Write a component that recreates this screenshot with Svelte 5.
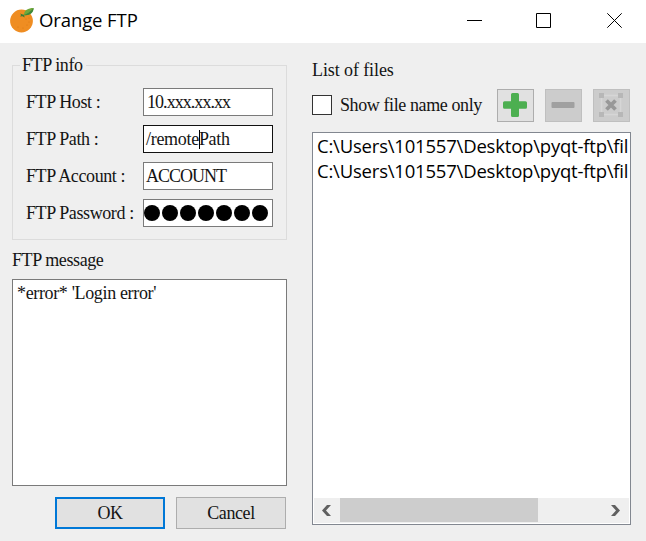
<script>
  let fields = $state([
    { label: 'FTP Host :', value: '10.xxx.xx.xx', cls: 'host' },
    { label: 'FTP Path :', value: '/remote', rest: 'Path', cls: 'path', focused: true },
    { label: 'FTP Account :', value: 'ACCOUNT', cls: 'account' },
    { label: 'FTP Password :', secret: 7, cls: 'password' }
  ]);
  let files = $state([
    'C:\\Users\\101557\\Desktop\\pyqt-ftp\\fil',
    'C:\\Users\\101557\\Desktop\\pyqt-ftp\\fil'
  ]);
</script>

<div class="window">
  <header>
    <svg class="logo" width="24" height="26" viewBox="0 0 24 26">
      <circle cx="11.5" cy="14" r="11.4" fill="#ef8d22" />
      <g fill="#d97716">
        <circle cx="16" cy="12" r=".6" /><circle cx="19" cy="15" r=".6" /><circle cx="17" cy="18" r=".6" />
        <circle cx="13" cy="21" r=".6" /><circle cx="19" cy="11" r=".6" /><circle cx="8" cy="20" r=".6" />
      </g>
      <path d="M10 6.5l3.5 1.3 2.8-1.2-2.2 2 .6 2-2.2-1.4-2.4.4 1-1.6z" fill="#3c7d35" />
      <path d="M14 8C14 3 18 1 23.6 1C23.5 6 19 9 14 8z" fill="#70a83b" />
      <path d="M14 8C17 7 20 5 23.6 1C23.5 6 19 9 14 8z" fill="#3e873a" />
    </svg>
    <span class="title">Orange FTP</span>
    <svg class="controls" width="156" height="16" viewBox="0 0 156 16" fill="none" stroke="#000" stroke-width="1">
      <path d="M0 7.5h15" />
      <path d="M69.5 .5h14v14h-14z" />
      <path d="M140.3 .3l14.4 14.4M154.7 .3L140.3 14.7" />
    </svg>
  </header>

  <main>
    <section class="left">
      <div class="group">
        <span class="legend">FTP info</span>
        {#each fields as f}
          <div class="row">
            <span class="label">{f.label}</span>
            <div class="field {f.cls}" class:focused={f.focused}>
              {#if f.secret}
                {#each Array(f.secret) as _}<i class="dot"></i>{/each}
              {:else}
                <span>{f.value}</span>{#if f.focused}<i class="caret"></i><span>{f.rest}</span>{/if}
              {/if}
            </div>
          </div>
        {/each}
      </div>
      <div class="heading">FTP message</div>
      <div class="message">*error* 'Login error'</div>
      <div class="actions">
        <button class="ok">OK</button>
        <button>Cancel</button>
      </div>
    </section>

    <section class="right">
      <div class="heading">List of files</div>
      <div class="toolbar">
        <span class="check"></span>
        <span class="checklabel">Show file name only</span>
        <button class="tool" aria-label="Add">
          <svg width="24" height="24" viewBox="0 0 24 24">
            <path d="M9.500 0h5q1.500 0 1.500 1.500V8.300h6.500q1.500 0 1.500 1.500v4.400q0 1.500-1.500 1.500H16v6.800q0 1.500-1.500 1.500h-5Q8 24 8 22.500V15.700H1.500Q0 15.700 0 14.200V9.800Q0 8.300 1.500 8.300H8V1.500Q8 0 9.500 0z" fill="#4caf50" />
          </svg>
        </button>
        <button class="tool off" aria-label="Remove">
          <svg width="24" height="24" viewBox="0 0 24 24"><rect x="0.500" y="9" width="23" height="6" rx="1" fill="#a0a0a0" /></svg>
        </button>
        <button class="tool off" aria-label="Clear">
          <svg width="24" height="24" viewBox="0 0 24 24">
            <rect x="2.500" y="2.500" width="19" height="19" fill="none" stroke="#d6d6d6" stroke-width="1.500" />
            <path d="M0 0h5v5H0zM19 0h5v5h-5zM0 19h5v5H0zM19 19h5v5h-5z" fill="#b7b7b7" />
            <path d="M7.500 7.500l9 9M16.500 7.500l-9 9" stroke="#989898" stroke-width="3.800" />
          </svg>
        </button>
      </div>
      <div class="list">
        <div class="items">
          {#each files as file}<div class="file">{file}</div>{/each}
        </div>
        <div class="scroll">
          <svg width="26" height="24" viewBox="0 0 26 24"><path d="M8 12.500L13 7h4l-5 5.500L17 18h-4z" fill="#606060" /></svg>
          <div class="track"><div class="thumb"></div></div>
          <svg width="26" height="24" viewBox="0 0 26 24"><path d="M17 12.500L12 7H8l5 5.500L8 18h4z" fill="#606060" /></svg>
        </div>
      </div>
    </section>
  </main>
</div>

<style>
  :global(body) { margin: 0; }
  .window, .window * { box-sizing: border-box; }
  .window {
    width: 646px; height: 541px; background: #efefef; overflow: hidden;
    display: flex; flex-direction: column; color: #141414;
    font: 18px/24px "Liberation Serif", "Times New Roman", serif;
    letter-spacing: -0.4px; white-space: nowrap;
  }
  header { height: 43px; background: #fff; display: flex; padding-left: 10px; flex: none; }
  .logo { margin-top: 7px; }
  .title {
    margin: 8px 0 0 5px; font: 18.500px/24px "Open Sans", sans-serif; letter-spacing: -0.1px; color: #000;
  }
  .controls { margin: 13px 23px 0 auto; }
  main { display: flex; flex: 1; padding-left: 12px; }
  .left { width: 275px; display: flex; flex-direction: column; }
  .group {
    position: relative; margin-top: 22px; height: 175px; border: 1px solid #dcdcdc;
    padding: 22px 13px 0; display: flex; flex-direction: column; gap: 9px;
  }
  .legend { position: absolute; left: 7px; top: -13px; padding: 0 3px 0 2px; background: #efefef; }
  .row { display: flex; height: 28px; align-items: center; }
  .label { width: 117px; }
  .field {
    width: 130px; height: 28px; border: 1px solid #7a7a7a; background: #fff;
    padding-left: 2px; display: flex; align-items: center;
  }
  .field.focused { border-color: #111; }
  .host { letter-spacing: -0.95px; padding-left: 3px; }
  .account { letter-spacing: -1px; }
  .caret { width: 1px; height: 19px; background: #000; margin-right: -1px; }
  .path { letter-spacing: -0.3px; }
  .password { padding-left: 0; gap: 2px; }
  .dot { width: 16px; height: 16px; border-radius: 50%; background: #000; flex: none; }
  .left .heading { margin-top: 8px; height: 24px; }
  .message {
    margin-top: 7px; height: 207px; border: 1px solid #7a7a7a; background: #fff;
    padding: 1px 4px; letter-spacing: -0.35px;
  }
  .actions { display: flex; justify-content: flex-end; gap: 11px; margin-top: 11px; padding-right: 1px; }
  button {
    width: 110px; height: 32px; padding: 0; border: 1px solid #adadad; border-radius: 0;
    background: #e1e1e1; font: inherit; letter-spacing: inherit; color: inherit;
  }
  .ok { border: 2px solid #0078d7; }
  .right { width: 319px; margin-left: 25px; display: flex; flex-direction: column; }
  .right .heading { margin-top: 15px; height: 24px; letter-spacing: -0.1px; }
  .toolbar { display: flex; align-items: center; height: 33px; margin-top: 7px; }
  .check { width: 20px; height: 20px; border: 1px solid #333; background: #fff; margin-top: -1px; }
  .checklabel { margin: -1px 0 0 8px; width: 157px; }
  .tool {
    width: 37px; height: 33px; margin-right: 11px; padding: 0 1px 1px 0;
    display: grid; place-items: center; flex: none;
  }
  .tool:last-child { margin-right: 0; }
  .off { background: #ccc; border-color: #bfbfbf; }
  .list {
    margin-top: 10px; height: 393px; border: 1px solid #828790; background: #fff;
    display: flex; flex-direction: column; padding: 0 1px 1px;
  }
  .items { flex: 1; overflow: hidden; padding-left: 3px; }
  .file { font: 18.500px/25px "Open Sans", sans-serif; letter-spacing: -0.2px; color: #000; }
  .scroll { height: 25px; background: #efefef; display: flex; }
  .track { flex: 1; }
  .thumb { width: 198px; height: 24px; background: #cdcdcd; }
</style>
